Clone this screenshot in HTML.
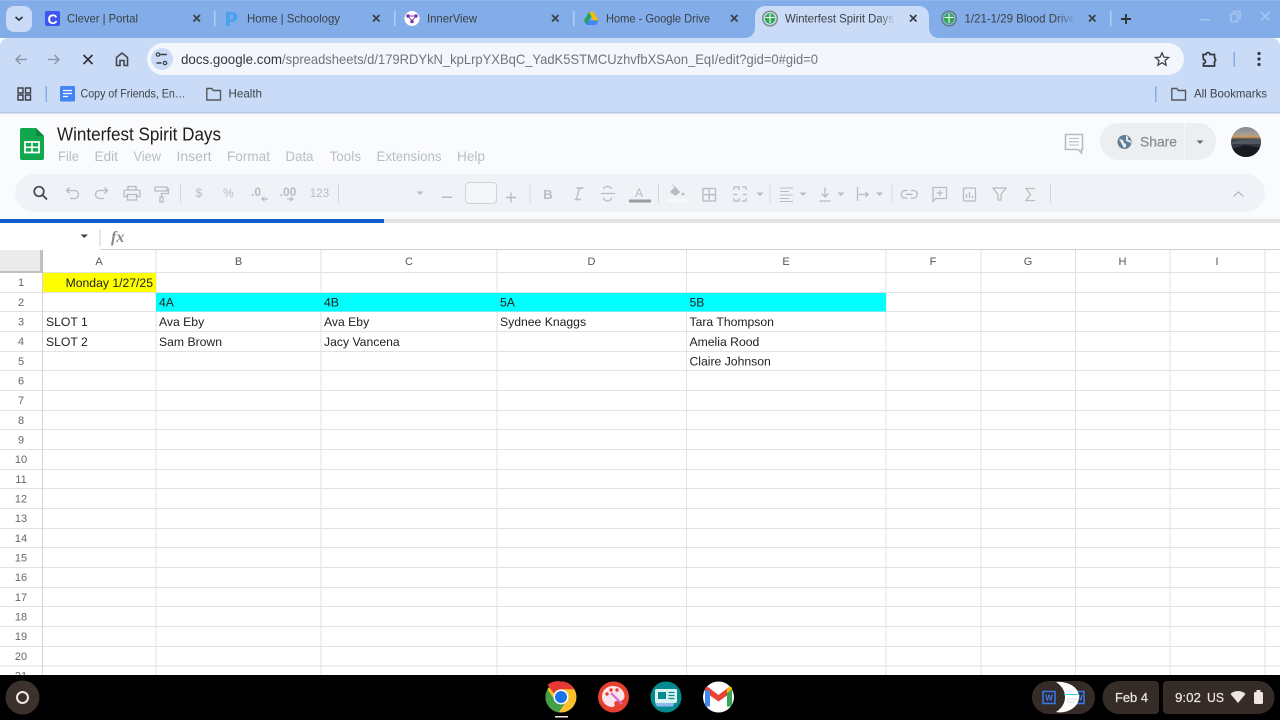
<!DOCTYPE html>
<html lang="en"><head><meta charset="utf-8"><title>Winterfest Spirit Days</title>
<style>
html,body{margin:0;padding:0;width:1280px;height:720px;overflow:hidden;background:#fff}
svg{display:block;position:absolute;left:0;top:0;filter:blur(.3px)}
text{font-family:"Liberation Sans",Arial,sans-serif}
.tab{font-size:12px;fill:#3b4046}
.bm{font-size:12px;fill:#3f4448}
.menu{font-size:14px;fill:#b9bcc1}
.cell{font-size:12.2px;fill:#222}
.rh{font-size:11px;fill:#666;text-anchor:middle}
.ch{font-size:11px;fill:#555;text-anchor:middle}
.ic{fill:none;stroke:#b8bbbf;stroke-width:1.3}
.dk{fill:none;stroke:#45494e;stroke-width:1.6}
.x{fill:none;stroke:#3a3f45;stroke-width:1.7}
.tl{font-size:12px;fill:#b8bbbf;text-anchor:middle}
.sep{fill:#d4d7db}
.car{fill:#b8bbbf}
.g{fill:#e2e2e3}
</style></head><body>
<svg width="1280" height="720" viewBox="0 0 1280 720" xmlns="http://www.w3.org/2000/svg">
<defs>
<linearGradient id="fa" x1="0" x2="1" y1="0" y2="0"><stop offset="0" stop-color="#c9dbf6" stop-opacity="0"/><stop offset="1" stop-color="#c9dbf6"/></linearGradient>
<linearGradient id="fb" x1="0" x2="1" y1="0" y2="0"><stop offset="0" stop-color="#83ade9" stop-opacity="0"/><stop offset="1" stop-color="#83ade9"/></linearGradient>
<linearGradient id="sky" x1="0" x2="0" y1="0" y2="1"><stop offset="0" stop-color="#7f8a96"/><stop offset=".26" stop-color="#aaa091"/><stop offset=".33" stop-color="#d09a60"/><stop offset=".42" stop-color="#39414c"/><stop offset="1" stop-color="#20262c"/></linearGradient>
</defs>

<!-- tab strip -->
<rect width="1280" height="38" fill="#83ade9"/>
<rect y="0" width="1280" height="1" fill="#8fb5ec"/>
<rect x="6" y="6" width="26" height="26" rx="8" fill="#c9dbf6"/>
<path d="M15.5 17l3.500 3 3.500-3" fill="none" stroke="#2f343a" stroke-width="1.800"/>

<rect x="45" y="11" width="15" height="15" rx="2" fill="#4054ee"/>
<text x="47.500" y="24" font-size="14" font-weight="bold" fill="#fff">C</text>
<text class="tab" x="67" y="22.500" textLength="71" lengthAdjust="spacingAndGlyphs">Clever | Portal</text>
<path class="x" d="M193.500 15l6.500 6.500m0-6.500l-6.500 6.500"/>
<rect x="214" y="11" width="1.500" height="15" fill="#b5cef3"/>

<path d="M226 12h6.500a5 5 0 0 1 0 10h-2.500v4h-4z" fill="#4aa3ea"/><rect x="230" y="15" width="3" height="4" fill="#83ade9"/>
<text class="tab" x="247" y="22.500" textLength="93" lengthAdjust="spacingAndGlyphs">Home | Schoology</text>
<path class="x" d="M373 15l6.500 6.500m0-6.500l-6.500 6.500"/>
<rect x="394" y="11" width="1.500" height="15" fill="#b5cef3"/>

<circle cx="412" cy="18.500" r="7.500" fill="#fff"/>
<path d="M408 16l4 5 4-5z" fill="none" stroke="#8a3fb0" stroke-width="1"/>
<circle cx="408" cy="16" r="1.700" fill="#7a2fa8"/><circle cx="416" cy="16" r="1.700" fill="#7a2fa8"/><circle cx="412" cy="21.500" r="1.700" fill="#7a2fa8"/>
<text class="tab" x="427" y="22.500" textLength="50" lengthAdjust="spacingAndGlyphs">InnerView</text>
<path class="x" d="M552 15l6.500 6.500m0-6.500l-6.500 6.500"/>
<rect x="573" y="11" width="1.500" height="15" fill="#b5cef3"/>

<path d="M589 12h4.500l5 8.500h-5z" fill="#fbbc04"/>
<path d="M589 12l-5 8.500 2.500 4.500 5-8.500z" fill="#1fa463"/>
<path d="M586.500 25h9.500l2.500-4.500h-9.500z" fill="#4285f4"/>
<text class="tab" x="606" y="22.500" textLength="104" lengthAdjust="spacingAndGlyphs">Home - Google Drive</text>
<path class="x" d="M731 15l6.500 6.500m0-6.500l-6.500 6.500"/>

<!-- toolbar body + active tab -->
<path d="M0 46a8 8 0 0 1 8-8H1272a8 8 0 0 1 8 8V113H0z" fill="#c9dbf6"/>
<path d="M745 38a10 10 0 0 0 10-10V16a10 10 0 0 1 10-10H919a10 10 0 0 1 10 10V28a10 10 0 0 0 10 10z" fill="#c9dbf6"/>
<circle cx="770" cy="18.500" r="7.300" fill="none" stroke="#7c8f8a" stroke-width="1.500"/>
<circle cx="770" cy="18.500" r="5.200" fill="#2fa84f"/><path d="M765.500 17.500h9M770 14v9" stroke="#fff" stroke-width="1.100"/>
<text class="tab" x="785" y="22.500" textLength="109" lengthAdjust="spacingAndGlyphs">Winterfest Spirit Days</text>
<rect x="878" y="8" width="18" height="22" fill="url(#fa)"/>
<path class="x" d="M910 15l6.500 6.500m0-6.500l-6.500 6.500"/>

<circle cx="949" cy="18.500" r="7.300" fill="none" stroke="#62807a" stroke-width="1.500"/>
<circle cx="949" cy="18.500" r="5.200" fill="#2fa84f"/><path d="M944.500 17.500h9M949 14v9" stroke="#fff" stroke-width="1.100"/>
<text class="tab" x="964.500" y="22.500" textLength="111" lengthAdjust="spacingAndGlyphs">1/21-1/29 Blood Drive</text>
<rect x="1056" y="8" width="20" height="22" fill="url(#fb)"/>
<path class="x" d="M1089 15l6.500 6.500m0-6.500l-6.500 6.500"/>
<rect x="1110" y="11" width="1.500" height="15" fill="#b5cef3"/>
<path d="M1121 19h10M1126 14v10" fill="none" stroke="#2f343a" stroke-width="1.900"/>
<rect x="1200" y="19" width="10" height="1.500" fill="#a6c4ef"/>
<path d="M1231 14v7.500h6.500V14zM1233.500 14v-2.500h6.500v7h-2.500" fill="none" stroke="#a6c4ef" stroke-width="1.500"/>
<path d="M1261 12l8.500 8.500m0-8.500l-8.500 8.500" fill="none" stroke="#a6c4ef" stroke-width="1.800"/>

<!-- nav row -->
<path d="M27 59.500H16m4.500-4.500l-4.500 4.500 4.500 4.500" fill="none" stroke="#8d98a8" stroke-width="1.500"/>
<path d="M48 59.500h11m-4.500-4.500l4.500 4.500-4.500 4.500" fill="none" stroke="#8d98a8" stroke-width="1.500"/>
<path d="M83.500 55l9 9m0-9l-9 9" fill="none" stroke="#2f343a" stroke-width="1.700"/>
<path d="M116.500 65.500v-8l5.500-4.500 5.500 4.500v8h-3.500v-5h-4v5z" class="dk"/>
<rect x="147" y="43" width="1037" height="32" rx="16" fill="#f3f7fd"/>
<circle cx="162" cy="59" r="11" fill="#c9dbf6"/>
<path d="M160 54.500h7M156.500 63h5" fill="none" stroke="#3a3f45" stroke-width="1.400"/>
<circle cx="158" cy="54.500" r="1.700" fill="none" stroke="#3a3f45" stroke-width="1.200"/><circle cx="165" cy="63" r="1.700" fill="none" stroke="#3a3f45" stroke-width="1.200"/>
<text x="181" y="64" font-size="14" fill="#33373c" textLength="101" lengthAdjust="spacingAndGlyphs">docs.google.com</text>
<text x="282" y="64" font-size="14" fill="#70757c" textLength="536" lengthAdjust="spacingAndGlyphs">/spreadsheets/d/179RDYkN_kpLrpYXBqC_YadK5STMCUzhvfbXSAon_EqI/edit?gid=0#gid=0</text>
<path d="M1162 52.800l1.900 4.300 4.700.400-3.600 3.100 1.100 4.600-4.100-2.400-4.100 2.400 1.100-4.600-3.600-3.100 4.700-.400z" fill="none" stroke="#3f4448" stroke-width="1.300"/>
<path d="M1203 54.500h3a2 2 0 0 1 4 0h4.500v3.500a2 2 0 0 1 0 3.500v4.500h-11v-2.500a2 2 0 0 0 0-4z" fill="none" stroke="#33373c" stroke-width="1.700"/>
<rect x="1233.500" y="52" width="1.500" height="15" fill="#83ade9"/>
<circle cx="1259" cy="53.500" r="1.600" fill="#33373c"/><circle cx="1259" cy="59" r="1.600" fill="#33373c"/><circle cx="1259" cy="64.500" r="1.600" fill="#33373c"/>

<!-- bookmarks -->
<path d="M18 88h5v5h-5zM25.500 88h5v5h-5zM18 95h5v5h-5zM25.500 95h5v5h-5z" fill="none" stroke="#3a3f45" stroke-width="1.400"/>
<rect x="45.500" y="86" width="1.500" height="16" fill="#83ade9"/>
<rect x="60" y="86" width="15" height="15.500" rx="1.500" fill="#4285f4"/>
<path d="M63 90.500h9M63 93.500h9M63 96.500h5" stroke="#fff" stroke-width="1.300"/>
<text class="bm" x="80.500" y="97.500" textLength="105" lengthAdjust="spacingAndGlyphs">Copy of Friends, En…</text>
<path d="M206.800 88.500h5l1.500 2h7.200v9.500h-13.700z" fill="none" stroke="#55595e" stroke-width="1.400"/>
<text class="bm" x="228.500" y="97.500" textLength="33.500" lengthAdjust="spacingAndGlyphs">Health</text>
<rect x="1155" y="86" width="1.500" height="16" fill="#83ade9"/>
<path d="M1171.800 88.500h5l1.500 2h7.200v9.500h-13.700z" fill="none" stroke="#55595e" stroke-width="1.400"/>
<text class="bm" x="1194" y="97.500" textLength="73" lengthAdjust="spacingAndGlyphs">All Bookmarks</text>

<!-- sheets header -->
<rect y="112" width="1280" height="1.500" fill="#b7c9e4"/>
<rect y="113.500" width="1280" height="106" fill="#fafbfd"/>
<path d="M22 128h14l8 8v22a2 2 0 0 1-2 2H22a2 2 0 0 1-2-2v-28a2 2 0 0 1 2-2z" fill="#10a84f"/>
<path d="M36 128l8 8h-8z" fill="#0a8a3e"/>
<path d="M25 142h14v10.500H25z" fill="none" stroke="#fff" stroke-width="1.800"/><path d="M25 147.300h14M32 142v10.500" stroke="#fff" stroke-width="1.600"/>
<text x="57" y="140.500" font-size="18" fill="#1f1f1f" textLength="164" lengthAdjust="spacingAndGlyphs">Winterfest Spirit Days</text>
<text class="menu" x="58" y="161" textLength="21" lengthAdjust="spacingAndGlyphs">File</text>
<text class="menu" x="94.500" y="161" textLength="23.500" lengthAdjust="spacingAndGlyphs">Edit</text>
<text class="menu" x="133.500" y="161" textLength="27.500" lengthAdjust="spacingAndGlyphs">View</text>
<text class="menu" x="176.500" y="161" textLength="35" lengthAdjust="spacingAndGlyphs">Insert</text>
<text class="menu" x="227" y="161" textLength="43" lengthAdjust="spacingAndGlyphs">Format</text>
<text class="menu" x="285.500" y="161" textLength="28" lengthAdjust="spacingAndGlyphs">Data</text>
<text class="menu" x="329.500" y="161" textLength="31.500" lengthAdjust="spacingAndGlyphs">Tools</text>
<text class="menu" x="376.500" y="161" textLength="65" lengthAdjust="spacingAndGlyphs">Extensions</text>
<text class="menu" x="457" y="161" textLength="28" lengthAdjust="spacingAndGlyphs">Help</text>

<path d="M1065.500 134.500h17v15h-1v3.500l-3.500-3.500h-12.500z" fill="none" stroke="#b8bbbf" stroke-width="1.600"/>
<path d="M1069 138.500h10M1069 141.800h10M1069 145h10" stroke="#b8bbbf" stroke-width="1.100"/>
<rect x="1100" y="123" width="116" height="37" rx="18.500" fill="#eceef0"/>
<rect x="1184" y="123" width="1" height="37" fill="#f5f6f7"/>
<circle cx="1124.500" cy="142" r="7" fill="#5f7f98"/>
<path d="M1119 139l4 1 1 3 2 1v3l-2 1zM1126 136l2.500 1-1 2.500 3 1 .5 3-2-1.500-3-1z" fill="#eceef0"/>
<text x="1140" y="146.500" font-size="14" fill="#8a8e93" stroke="#8a8e93" stroke-width=".25" textLength="37" lengthAdjust="spacingAndGlyphs">Share</text>
<path d="M1196.500 140.500h7l-3.500 3.500z" fill="#666a6f"/>
<clipPath id="av"><circle cx="1246" cy="142" r="15"/></clipPath>
<g clip-path="url(#av)"><rect x="1231" y="127" width="30" height="30" fill="url(#sky)"/><path d="M1231 142l10-2 20-1v5h-30z" fill="#4f5760"/><path d="M1231 149l14-4 16 3v9h-30z" fill="#171b1f"/></g>

<!-- toolbar pill -->
<rect x="15" y="174" width="1250" height="38" rx="19" fill="#eff3f8"/>
<circle cx="39" cy="191.500" r="4.800" fill="none" stroke="#45494e" stroke-width="1.700"/><path d="M42.500 195l4.500 4.500" stroke="#45494e" stroke-width="1.900"/>
<path class="ic" d="M67 190.500h7.500a4 4 0 0 1 0 8H70M69.500 187.500l-3 3 3 3"/>
<path class="ic" d="M107 190.500h-7.500a4 4 0 0 0 0 8H104M104.500 187.500l3 3-3 3"/>
<path class="ic" d="M125.500 190h13a1.500 1.500 0 0 1 1.500 1.500v5h-3v-2h-10v2h-3v-5a1.500 1.500 0 0 1 1.500-1.500zM128 190v-3.500h8v3.500M127.500 195v5h9v-5"/>
<path class="ic" d="M155 187h12v4h-12zM167 189h1.500v4.500h-7v3"/><rect class="ic" x="160" y="197" width="3" height="5"/>
<rect class="sep" x="180" y="184" width="1" height="19"/>
<text class="tl" x="199" y="197">$</text>
<text class="tl" x="228.500" y="197">%</text>
<text class="tl" x="256" y="196" style="font-weight:bold">.0</text><path d="M268 199h-6m2.500-2l-2.500 2 2.500 2" fill="none" stroke="#b8bbbf" stroke-width="1.200"/>
<text class="tl" x="288" y="196" style="font-weight:bold">.00</text><path d="M287 199h6m-2.500-2l2.500 2-2.500 2" fill="none" stroke="#b8bbbf" stroke-width="1.200"/>
<text class="tl" x="319.500" y="197" style="font-size:11.500px">123</text>
<rect class="sep" x="338" y="184" width="1" height="19"/>
<path class="car" d="M416.500 191.500h7l-3.500 3.500z"/>
<rect class="car" x="442" y="196.500" width="10" height="1.500"/>
<rect x="465.500" y="182.500" width="31" height="21" rx="3.500" fill="#f4f6f9" stroke="#cfd3d8"/>
<path d="M506 197.500h10M511 192.500v10" stroke="#b8bbbf" stroke-width="1.400"/>
<rect class="sep" x="529.500" y="184" width="1" height="19"/>
<text class="tl" x="548" y="199" style="font-size:13px;font-weight:bold">B</text>
<path d="M579.500 188l-3 11M574.500 199.500h6.500M576.500 188h7" fill="none" stroke="#b8bbbf" stroke-width="1.400"/>
<path class="ic" d="M601 193.500h14M603.500 189a4 3 0 0 1 4-2.500 4 3 0 0 1 4 2.500M603.500 197.500a4 3.500 0 0 0 8 0"/>
<text class="tl" x="639" y="197">A</text>
<rect x="629" y="199.500" width="22" height="3" fill="#9a9c9f"/>
<rect class="sep" x="658" y="184" width="1" height="19"/>
<path d="M672 184.500l3 3M675 187l5 5-4.500 3.500-5-3.500z" fill="#b8bbbf" stroke="#b8bbbf" stroke-width=".6"/><circle cx="683" cy="194" r="1.400" fill="#b8bbbf"/>
<rect x="667" y="199" width="22" height="3" fill="#f7f8fa"/>
<path class="ic" d="M703 188.500h12.500v12.500H703zM709.200 188.500v12.500M703 194.700h12.500"/>
<path class="ic" d="M734 190v-3h5v3M734 198v3h5v-3M746 190v-3h-4M746 198v3h-4M733 194.500h4.500M747 194.500h-4"/>
<path class="car" d="M756.500 192.500h7l-3.500 3.500z"/>
<rect class="sep" x="769.500" y="184" width="1" height="19"/>
<path class="ic" d="M780 188h13M780 191.500h9M780 195h13M780 198.500h9M780 201.500h13" style="stroke-width:1.100"/>
<path class="car" d="M799.500 192.500h7l-3.500 3.500z"/>
<path class="ic" d="M825 187.500v9.500m-3.500-3.500l3.500 3.500 3.500-3.500M819.500 201h11"/>
<path class="car" d="M837.500 192.500h7l-3.500 3.500z"/>
<path class="ic" d="M857.500 187v14M859 194.500h9m-2.500-2.500l2.500 2.500-2.500 2.500"/>
<path class="car" d="M876 192.500h7l-3.500 3.500z"/>
<rect class="sep" x="891.500" y="184" width="1" height="19"/>
<path class="ic" d="M907.500 190.500h-2.500a3.800 3.800 0 0 0 0 7.600h2.500M911 190.500h2.500a3.800 3.800 0 0 1 0 7.600H911M906 194.300h6.500"/>
<path class="ic" d="M933 187.500h13.500v11H936l-3 3zM939.700 190v6M936.700 193h6"/>
<rect class="ic" x="963.500" y="188" width="12" height="13" rx="1"/><path class="ic" d="M966.500 198v-4M969.500 198v-6M972.500 198v-2"/>
<path class="ic" d="M993 188h13l-5 6.500v5.500h-3v-5.500z"/>
<path class="ic" d="M1035 188.500h-9l4.500 6-4.500 6h9"/>
<rect class="sep" x="1050" y="184" width="1" height="19"/>
<path class="ic" d="M1233.500 196.500l5-4.500 5 4.500"/>

<!-- progress -->
<rect y="219" width="1280" height="4" fill="#e3e4e0"/>
<rect y="219" width="384" height="4" fill="#0f5ccb"/>

<!-- formula bar -->
<rect y="223" width="1280" height="27" fill="#fff"/>
<path d="M80.500 234.500h7.500l-3.750 3.500z" fill="#444"/>
<rect x="99.500" y="229" width="1" height="17" fill="#d0d0d0"/>
<text x="111" y="242" font-size="16" font-style="italic" font-weight="bold" fill="#8a8a8a" style="font-family:'Liberation Serif',serif">fx</text>
<rect x="100" y="249" width="1180" height="1" fill="#d2d2d2"/>

<!-- grid -->
<rect x="0" y="250" width="42" height="22" fill="#ebebeb"/>
<rect x="40" y="250" width="3" height="23" fill="#c0c0c0"/>
<rect x="0" y="271" width="43" height="2" fill="#c0c0c0"/>
<g>
<rect class="g" y="272" x="43" width="1237" height="1"/><rect class="g" y="292" width="1280" height="1"/><rect class="g" y="311" width="1280" height="1"/><rect class="g" y="331" width="1280" height="1"/><rect class="g" y="351" width="1280" height="1"/><rect class="g" y="370" width="1280" height="1"/><rect class="g" y="390" width="1280" height="1"/><rect class="g" y="410" width="1280" height="1"/><rect class="g" y="429" width="1280" height="1"/><rect class="g" y="449" width="1280" height="1"/><rect class="g" y="469" width="1280" height="1"/><rect class="g" y="488" width="1280" height="1"/><rect class="g" y="508" width="1280" height="1"/><rect class="g" y="528" width="1280" height="1"/><rect class="g" y="547" width="1280" height="1"/><rect class="g" y="567" width="1280" height="1"/><rect class="g" y="587" width="1280" height="1"/><rect class="g" y="606" width="1280" height="1"/><rect class="g" y="626" width="1280" height="1"/><rect class="g" y="646" width="1280" height="1"/><rect class="g" y="665.500" width="1280" height="1"/>
<rect x="42" y="273" width="1" height="402" fill="#d6d6d6"/><rect class="g" x="155.500" y="250" width="1" height="425"/><rect class="g" x="320.500" y="250" width="1" height="425"/><rect class="g" x="496.500" y="250" width="1" height="425"/><rect class="g" x="686" y="250" width="1" height="425"/><rect class="g" x="885.500" y="250" width="1" height="425"/><rect class="g" x="980.500" y="250" width="1" height="425"/><rect class="g" x="1075" y="250" width="1" height="425"/><rect class="g" x="1169.500" y="250" width="1" height="425"/><rect class="g" x="1264.500" y="250" width="1" height="425"/>
</g>
<rect x="43" y="273" width="113" height="19" fill="#ffff00"/>
<rect x="156" y="293" width="730" height="18.500" fill="#00ffff"/>

<text class="ch" x="99" y="265">A</text><text class="ch" x="238.500" y="265">B</text><text class="ch" x="409" y="265">C</text><text class="ch" x="591.500" y="265">D</text><text class="ch" x="786" y="265">E</text><text class="ch" x="933" y="265">F</text><text class="ch" x="1028" y="265">G</text><text class="ch" x="1122.500" y="265">H</text><text class="ch" x="1217" y="265">I</text>

<text class="rh" x="21" y="286">1</text><text class="rh" x="21" y="306">2</text><text class="rh" x="21" y="325.500">3</text><text class="rh" x="21" y="345">4</text><text class="rh" x="21" y="365">5</text><text class="rh" x="21" y="384.500">6</text><text class="rh" x="21" y="404">7</text><text class="rh" x="21" y="424">8</text><text class="rh" x="21" y="443.500">9</text><text class="rh" x="21" y="463">10</text><text class="rh" x="21" y="483">11</text><text class="rh" x="21" y="502.500">12</text><text class="rh" x="21" y="522">13</text><text class="rh" x="21" y="542">14</text><text class="rh" x="21" y="561.500">15</text><text class="rh" x="21" y="581">16</text><text class="rh" x="21" y="601">17</text><text class="rh" x="21" y="620.500">18</text><text class="rh" x="21" y="640">19</text><text class="rh" x="21" y="660">20</text><text class="rh" x="21" y="679.500">21</text>

<text class="cell" x="153" y="287" text-anchor="end">Monday 1/27/25</text>
<text class="cell" x="159" y="306.500">4A</text><text class="cell" x="324" y="306.500">4B</text><text class="cell" x="500" y="306.500">5A</text><text class="cell" x="689.500" y="306.500">5B</text>
<text class="cell" x="46" y="326">SLOT 1</text><text class="cell" x="159" y="326">Ava Eby</text><text class="cell" x="324" y="326">Ava Eby</text><text class="cell" x="500" y="326">Sydnee Knaggs</text><text class="cell" x="689.500" y="326">Tara Thompson</text>
<text class="cell" x="46" y="346">SLOT 2</text><text class="cell" x="159" y="346">Sam Brown</text><text class="cell" x="324" y="346">Jacy Vancena</text><text class="cell" x="689.500" y="346">Amelia Rood</text>
<text class="cell" x="689.500" y="365.500">Claire Johnson</text>

<!-- shelf -->
<rect y="675" width="1280" height="45" fill="#000"/>
<circle cx="22.500" cy="697.500" r="17" fill="#3b322e"/>
<circle cx="22.500" cy="697.500" r="5.500" fill="none" stroke="#f0e6dd" stroke-width="2"/>

<!-- chrome -->
<circle cx="561" cy="697" r="15.500" fill="#fbc02d"/>
<path d="M561 681.500a15.500 15.500 0 0 1 13.400 7.750H561a7.750 7.750 0 0 0-7 4.400l-6.500-8.700A15.500 15.500 0 0 1 561 681.500z" fill="#e53935"/>
<path d="M547.500 689.300a15.500 15.500 0 0 0 11.200 23l6.700-9.500a7.750 7.750 0 0 1-10.700-3z" fill="#43a047"/>
<circle cx="561" cy="697" r="7.500" fill="#fff"/><circle cx="561" cy="697" r="6" fill="#1a73e8"/>
<rect x="555" y="716" width="13" height="1.500" fill="#f0e6dd"/>

<!-- palette -->
<circle cx="613.500" cy="697" r="15.500" fill="#e8402f"/>
<path d="M613 686c-6.500 0-11 4.800-11 10.800 0 5.700 4.700 10.200 10.300 10.200 2 0 2.700-1.200 2.200-2.700-.6-1.800.2-3.300 2.300-3.300h3c2.700 0 4.700-2 4.700-4.700 0-5.800-5-10.300-11.500-10.300z" fill="#fce4ec"/>
<circle cx="607" cy="694" r="1.700" fill="#e8402f"/><circle cx="611" cy="690" r="1.700" fill="#e8402f"/><circle cx="617" cy="690" r="1.700" fill="#e8402f"/>
<path d="M611 693l11 11" stroke="#d96ad6" stroke-width="2.200"/>

<!-- slides-like -->
<circle cx="666" cy="697" r="15.500" fill="#048a8f"/>
<rect x="655" y="689" width="22" height="14" rx="1.500" fill="#d9f3f1"/>
<path d="M655 703h19l-1 3.500h-16z" fill="#8fb8ef"/>
<rect x="658" y="692" width="8" height="7" fill="#048a8f"/>
<path d="M668.500 692.500h6M668.500 695.500h6M668.500 698.500h6" stroke="#048a8f" stroke-width="1.200"/>

<!-- gmail -->
<circle cx="718.500" cy="697" r="15.500" fill="#fff"/>
<path d="M705 692l13.500 9.500L732 692v-4l-3-1-10.500 8-10.500-8-3 1z" fill="#ea4335"/>
<path d="M705 690.500h5v16h-3a2 2 0 0 1-2-2z" fill="#4285f4"/>
<path d="M727 690.500h5v14a2 2 0 0 1-2 2h-3z" fill="#34a853"/>
<path d="M727 693l5-3.500v-1.500a2 2 0 0 0-3-1l-2 1.500z" fill="#fbbc04"/>

<!-- tray -->
<rect x="1032" y="681" width="63" height="33" rx="16.500" fill="#352c28"/>
<rect x="1043" y="691.500" width="12" height="12" fill="#2a2a3c" stroke="#3b78e7" stroke-width="1.500"/>
<text x="1049" y="700.500" font-size="8" font-weight="bold" fill="#4a7fd8" text-anchor="middle">W</text>
<rect x="1073" y="691.500" width="11" height="12" fill="#2a2a3c" stroke="#3b78e7" stroke-width="1.500"/>
<text x="1079" y="700.500" font-size="8" font-weight="bold" fill="#4a7fd8" text-anchor="middle">W</text>
<path d="M1056 682C1066 681 1079 686 1079 697C1079 708 1066 714 1056 712C1062 708 1065 703 1065 697C1065 691 1062 686 1056 682z" fill="#fff"/>
<path d="M1064 694.500h14" stroke="#30d6e0" stroke-width="1"/>
<path d="M1067 699h10M1067 702h8" stroke="#d9dde2" stroke-width="1"/>

<path d="M1119 681h36a4 4 0 0 1 4 4v25a4 4 0 0 1-4 4h-36a16.500 16.500 0 0 1 0-33z" fill="#352c28"/>
<text x="1115" y="702" font-size="12.500" fill="#efe6df" stroke="#efe6df" stroke-width=".2" textLength="33" lengthAdjust="spacingAndGlyphs">Feb 4</text>
<path d="M1167 681h91a16.500 16.500 0 0 1 0 33h-91a4 4 0 0 1-4-4v-25a4 4 0 0 1 4-4z" fill="#352c28"/>
<text x="1175" y="702" font-size="12.500" fill="#efe6df" stroke="#efe6df" stroke-width=".2" textLength="26" lengthAdjust="spacingAndGlyphs">9:02</text>
<text x="1207" y="702" font-size="12.500" fill="#efe6df" stroke="#efe6df" stroke-width=".2" textLength="17" lengthAdjust="spacingAndGlyphs">US</text>
<path d="M1230.500 694a11 11 0 0 1 15 0l-7.500 9z" fill="#efe6df"/>
<rect x="1254" y="692" width="9" height="12" rx="1.500" fill="#efe6df"/><rect x="1256.500" y="690" width="4" height="2" fill="#efe6df"/>
</svg>
</body></html>
